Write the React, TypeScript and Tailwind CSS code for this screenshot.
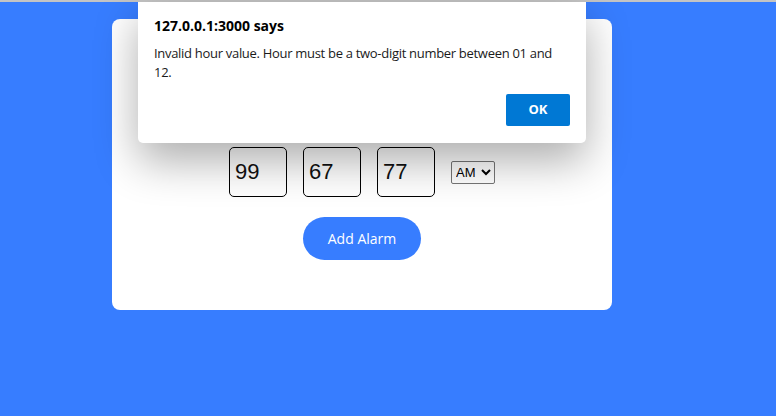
import { useState } from 'react';

export default function App() {
  const [hour, setHour] = useState('99');
  const [minute, setMinute] = useState('67');
  const [second, setSecond] = useState('77');
  const [period, setPeriod] = useState('AM');

  return (
    <div className="relative min-h-screen border-t-2 border-[#c4c4c4] bg-[#377dff] pt-[17px]">
      <div className="ml-[112px] flex h-[291px] w-[500px] flex-col items-center rounded-lg bg-white pt-[128px]">
        <div className="flex items-center gap-4">
          {[
            [hour, setHour],
            [minute, setMinute],
            [second, setSecond]
          ].map(([value, setValue], i) => (
            <input
              key={i}
              value={value as string}
              onChange={(e) => (setValue as (v: string) => void)(e.target.value)}
              className="h-[50px] w-[58px] rounded-[5px] border border-black px-[5px] font-['Liberation_Sans',Arial,sans-serif] text-[22px] text-[#111] outline-none"
            />
          ))}
          <select
            value={period}
            onChange={(e) => setPeriod(e.target.value)}
            className="h-[23px] w-[44px] rounded-[2px] border border-[#767676] bg-white font-['Liberation_Sans',Arial,sans-serif] text-[13px] text-black"
          >
            <option>AM</option>
            <option>PM</option>
          </select>
        </div>
        <button className="mt-5 h-[43px] w-[118px] rounded-full bg-[#377dff] font-['Open_Sans',sans-serif] text-[14px] font-medium text-white">
          Add Alarm
        </button>
      </div>

      <div className="absolute left-[138px] top-0 flex h-[141px] w-[448px] flex-col rounded-b-[5px] bg-white px-4 pb-[15px] pt-[14px] font-['Open_Sans','Noto_Sans',sans-serif] text-black shadow-[0_18px_44px_rgba(0,0,0,0.32)]">
        <h2 className="text-[14px] font-bold leading-5">127.0.0.1:3000 says</h2>
        <p className="mt-[8px] text-[13px] leading-[19px] tracking-[-0.3px] text-[#1a1a1a]">
          Invalid hour value. Hour must be a two-digit number between 01 and 12.
        </p>
        <div className="mt-auto mb-[2px] flex justify-end">
          <button className="h-8 w-16 rounded-[2px] bg-[#0078d4] text-[13px] font-bold text-white">OK</button>
        </div>
      </div>
    </div>
  );
}
